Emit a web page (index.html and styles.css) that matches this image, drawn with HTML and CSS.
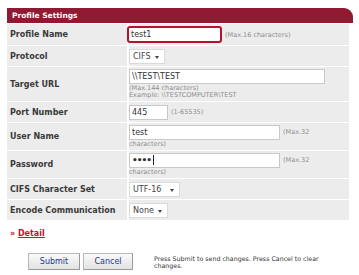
FILE: index.html
```html
<!DOCTYPE html>
<html lang="en">
<head>
    <meta charset="UTF-8">
    <title>Profile Settings</title>
    <link rel="stylesheet" href="styles.css">
</head>
<body>
    <div class="page">
        <div class="panel-title">Profile Settings</div>
        <div class="settings">
            <div class="label">Profile Name</div>
            <div class="value inline">
                <span class="field focus" style="width: 95px">test1</span>
                <span class="note">(Max.16 characters)</span>
            </div>

            <div class="label">Protocol</div>
            <div class="value inline">
                <span class="select" style="width: 36px">CIFS</span>
            </div>

            <div class="label">Target URL</div>
            <div class="value">
                <span class="field" style="width: 196px">\\TEST\TEST</span>
                <div class="note">(Max.144 characters)<br>Example: \\TESTCOMPUTER\TEST</div>
            </div>

            <div class="label">Port Number</div>
            <div class="value inline">
                <span class="field" style="width: 39px">445</span>
                <span class="note">(1-65535)</span>
            </div>

            <div class="label">User Name</div>
            <div class="value">
                <div class="inline">
                    <span class="field" style="width: 151px">test</span>
                    <span class="note">(Max.32</span>
                </div>
                <div class="note">characters)</div>
            </div>

            <div class="label">Password</div>
            <div class="value">
                <div class="inline">
                    <span class="field dots" style="width: 151px">&bull;&bull;&bull;&bull;<span class="caret"></span></span>
                    <span class="note">(Max.32</span>
                </div>
                <div class="note">characters)</div>
            </div>

            <div class="label">CIFS Character Set</div>
            <div class="value inline">
                <span class="select" style="width: 51px">UTF-16</span>
            </div>

            <div class="label">Encode Communication</div>
            <div class="value inline">
                <span class="select" style="width: 39px">None</span>
            </div>
        </div>

        <div class="detail"><span class="arrow">&raquo;</span> <a href="#">Detail</a></div>

        <div class="actions">
            <button type="button" class="btn" style="width: 52px">Submit</button>
            <button type="button" class="btn" style="width: 50px">Cancel</button>
            <p class="help">Press Submit to send changes. Press Cancel to clear changes.</p>
        </div>
    </div>
</body>
</html>
```

FILE: styles.css
```css
body {
    margin: 0;
    padding: 0;
    background: white;
    font-family: "DejaVu Sans", Verdana, sans-serif;
    color: #333;
}
.page {
    padding: 8px 6px 0 7px;
}
.panel-title {
    background-color: #8f1a31;
    color: white;
    font-weight: bold;
    font-size: 7.5px;
    height: 15px;
    line-height: 15px;
    padding-left: 5px;
    border-top-right-radius: 9px;
}
.settings {
    display: grid;
    grid-template-columns: 120px 1fr;
    column-gap: 2px;
    row-gap: 1px;
    margin-top: 1px;
    margin-right: 4px;
}
.label {
    background-color: #ececec;
    font-weight: bold;
    font-size: 8px;
    color: #3a3a3a;
    display: flex;
    align-items: center;
    padding-left: 3px;
    min-height: 20px;
}
.value {
    background-color: #ececec;
    padding: 2px 0 2px 0;
    min-height: 16px;
    font-size: 7px;
}
.value.inline,
.inline {
    display: flex;
    align-items: center;
    gap: 3px;
}
.field {
    display: inline-block;
    box-sizing: border-box;
    height: 15px;
    line-height: 13px;
    background: white;
    border: 1px solid #c8c8c8;
    padding-left: 2px;
    font-size: 8px;
    color: #333;
}
.field.focus {
    height: 17px;
    line-height: 13px;
    border: 2px solid #b3132d;
    border-radius: 3px;
    margin-left: -2px;
}
.field.dots {
    font-size: 9px;
    letter-spacing: -1px;
    font-weight: bold;
}
.caret {
    display: inline-block;
    width: 1px;
    height: 10px;
    margin-left: 2px;
    background: #222;
    vertical-align: -2px;
}
.select {
    display: inline-block;
    box-sizing: border-box;
    height: 15px;
    line-height: 13px;
    background: white;
    border: 1px solid #dadada;
    padding-left: 3px;
    font-size: 8px;
    color: #444;
    position: relative;
}
.select::after {
    content: "";
    position: absolute;
    right: 5px;
    top: 6px;
    border-left: 2px solid transparent;
    border-right: 2px solid transparent;
    border-top: 3px solid #444;
}
.note {
    font-size: 6.5px;
    color: #8c8c8c;
    line-height: 7px;
}
.value > .note {
    margin-top: 1px;
}
.detail {
    margin-top: 9px;
    padding-left: 3px;
    font-size: 8px;
    font-weight: bold;
}
.detail .arrow {
    color: #c8102e;
}
.detail a {
    color: #c8102e;
    text-decoration: underline;
}
.actions {
    display: flex;
    align-items: center;
    margin-top: 15px;
    padding-left: 21px;
    gap: 3px;
}
.btn {
    height: 17px;
    padding: 0;
    font-family: "DejaVu Sans", Verdana, sans-serif;
    font-size: 8px;
    color: #1a3a8a;
    background: linear-gradient(#fafafa, #e2e2e2);
    border: 1px solid #b8b8b8;
    border-right-color: #999;
    border-bottom-color: #999;
}
.help {
    margin: 0 0 0 18px;
    font-size: 6.3px;
    line-height: 7px;
    color: #333;
    width: 185px;
}
```
